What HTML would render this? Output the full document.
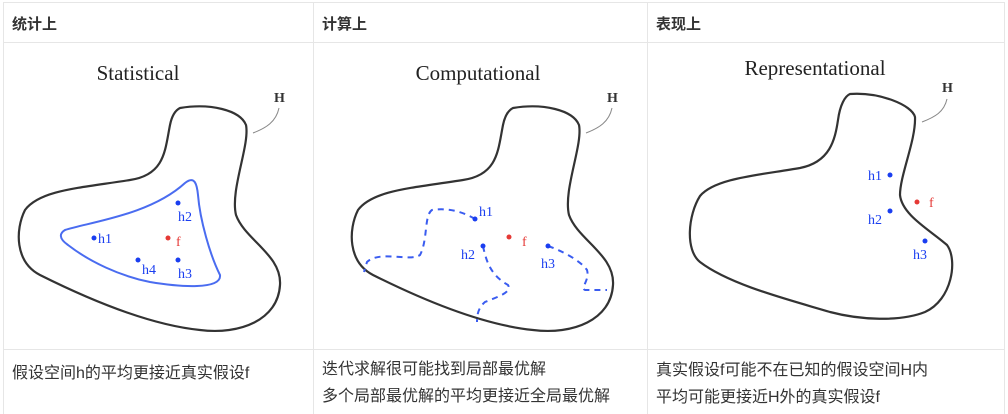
<!DOCTYPE html>
<html><head><meta charset="utf-8"><style>
body{margin:0;width:1008px;height:414px;background:#fff;overflow:hidden;font-family:"Liberation Sans","Noto Sans CJK SC",sans-serif;color:#333}
.t{position:absolute;font-size:16px;white-space:nowrap}
.b{font-weight:bold;font-size:15px}
</style></head><body>
<svg width="1008" height="414" style="position:absolute;left:0;top:0" font-family="Liberation Serif, serif">
<g stroke="#e6e6e6" stroke-width="1" fill="none">
<rect x="3.5" y="2.5" width="1001" height="420"/>
<line x1="3" y1="42.5" x2="1005" y2="42.5"/>
<line x1="3" y1="349.5" x2="1005" y2="349.5"/>
<line x1="313.5" y1="2" x2="313.5" y2="414"/>
<line x1="647.5" y1="2" x2="647.5" y2="414"/>
</g>
<!-- panel 1 -->
<text x="138" y="80" font-size="21" text-anchor="middle" fill="#222">Statistical</text>
<path d="M180,108 C210,103 240,110 246,125 C250,145 230,190 236,215 C245,240 282,255 280,285 C278,320 240,335 200,330 C150,325 90,300 40,275 C15,262 15,230 25,210 C40,190 80,188 130,180 C165,175 165,150 170,125 C172,115 176,110 180,108 Z" fill="none" stroke="#333" stroke-width="2.2"/>
<path d="M65,230 C90,222 150,215 185,183 C195,175 197,185 198,195 C200,220 210,255 220,275 C222,290 180,287 150,282 C120,276 90,262 68,245 C58,238 60,233 65,230 Z" fill="none" stroke="#4a6cf0" stroke-width="2"/>
<text x="274" y="102" font-size="14" fill="#333" font-weight="bold">H</text>
<path d="M279,108 C276,122 266,128 253,133" fill="none" stroke="#888" stroke-width="1"/>
<g fill="#1a3ef0" font-size="14">
<circle cx="94" cy="238" r="2.5"/><text x="98" y="243">h1</text>
<circle cx="178" cy="203" r="2.5"/><text x="178" y="221">h2</text>
<circle cx="138" cy="260" r="2.5"/><text x="142" y="274">h4</text>
<circle cx="178" cy="260" r="2.5"/><text x="178" y="278">h3</text>
</g>
<circle cx="168" cy="238" r="2.5" fill="#e53935"/><text x="176" y="246" font-size="14" fill="#e53935">f</text>
<!-- panel 2 -->
<text x="478" y="80" font-size="21" text-anchor="middle" fill="#222">Computational</text>
<path d="M513,108 C543,103 573,110 579,125 C583,145 563,190 569,215 C578,240 615,255 613,285 C611,320 573,335 533,330 C483,325 423,300 373,275 C348,262 348,230 358,210 C373,190 413,188 463,180 C498,175 498,150 503,125 C505,115 509,110 513,108 Z" fill="none" stroke="#333" stroke-width="2.2"/>
<text x="607" y="102" font-size="14" fill="#333" font-weight="bold">H</text>
<path d="M612,108 C609,122 599,128 586,133" fill="none" stroke="#888" stroke-width="1"/>
<g fill="none" stroke="#3a5cf0" stroke-width="2" stroke-dasharray="6,5">
<path d="M475,219 C460,210 445,208 432,210 C424,215 428,240 420,255 C410,262 380,250 367,262 L364,272"/>
<path d="M483,246 C486,260 490,275 508,285 C512,292 500,296 485,302 C478,308 477,315 477,322"/>
<path d="M548,246 C560,250 580,260 587,270 C590,280 580,288 585,290 L607,290"/>
</g>
<g fill="#1a3ef0" font-size="14">
<circle cx="475" cy="219" r="2.5"/><text x="479" y="216">h1</text>
<circle cx="483" cy="246" r="2.5"/><text x="461" y="259">h2</text>
<circle cx="548" cy="246" r="2.5"/><text x="541" y="268">h3</text>
</g>
<circle cx="509" cy="237" r="2.5" fill="#e53935"/><text x="522" y="246" font-size="14" fill="#e53935">f</text>
<!-- panel 3 -->
<text x="815" y="75" font-size="21" text-anchor="middle" fill="#222">Representational</text>
<path d="M850,94 C880,92 912,105 915,117 C916,140 900,175 900,195 C902,215 930,230 947,245 C958,260 952,300 925,312 C900,322 860,320 830,312 C790,300 730,285 700,262 C685,250 688,215 700,196 C715,178 760,175 800,168 C830,162 835,140 838,120 C840,105 845,96 850,94 Z" fill="none" stroke="#333" stroke-width="2.2"/>
<text x="942" y="92" font-size="14" fill="#333" font-weight="bold">H</text>
<path d="M947,99 C944,112 935,117 922,122" fill="none" stroke="#888" stroke-width="1"/>
<g fill="#1a3ef0" font-size="14">
<circle cx="890" cy="175" r="2.5"/><text x="868" y="180">h1</text>
<circle cx="890" cy="211" r="2.5"/><text x="868" y="224">h2</text>
<circle cx="925" cy="241" r="2.5"/><text x="913" y="259">h3</text>
</g>
<circle cx="917" cy="202" r="2.5" fill="#e53935"/><text x="929" y="207" font-size="14" fill="#e53935">f</text>
</svg>
<div class="t b" style="left:12px;top:13px">统计上</div>
<div class="t b" style="left:322px;top:13px">计算上</div>
<div class="t b" style="left:656px;top:13px">表现上</div>
<div class="t" style="left:12px;top:359px">假设空间h的平均更接近真实假设f</div>
<div class="t" style="left:322px;top:356px;line-height:27px">迭代求解很可能找到局部最优解<br>多个局部最优解的平均更接近全局最优解</div>
<div class="t" style="left:656px;top:357px;line-height:27px">真实假设f可能不在已知的假设空间H内<br>平均可能更接近H外的真实假设f</div>
</body></html>
